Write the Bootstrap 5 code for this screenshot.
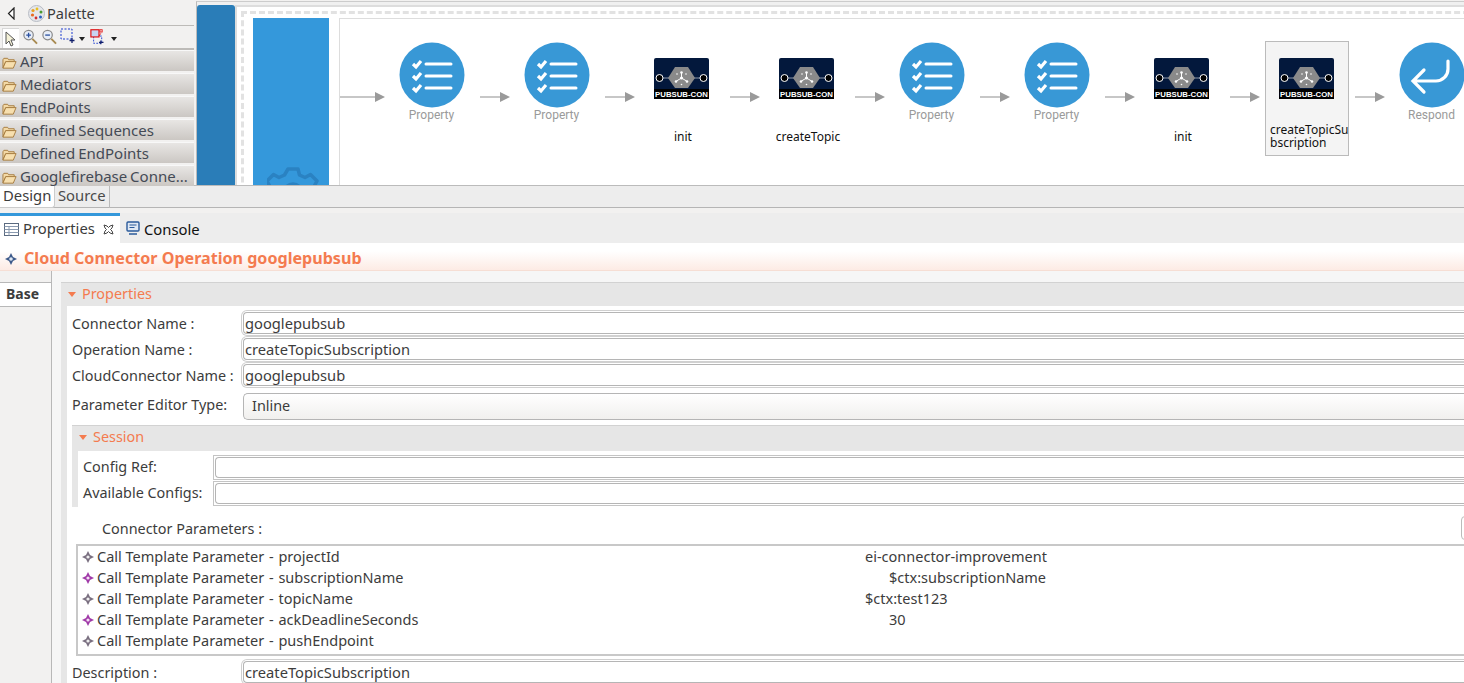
<!DOCTYPE html>
<html lang="en">
<head>
<meta charset="UTF-8">
<title>Cloud Connector Operation googlepubsub</title>
<link href="https://cdn.jsdelivr.net/npm/bootstrap@5.3.0/dist/css/bootstrap.min.css" rel="stylesheet">
<style>
html, body { height: 683px; overflow: hidden; }
body { width: 1464px; background: #f2f1f0; font-family: "Noto Sans", sans-serif; font-size: 14.4px; color: #3c3c3c; line-height: 1.2; }
.ui-top { height: 185px; }
.palette { width: 194px; background: #f2f1f0; flex: none; }
.pal-head { height: 26px; padding: 2px 0 0 7px; border-bottom: 1px solid #bdbbb8; font-size: 14.6px; }
.pal-logo { margin-left: 13px; }
.pal-title { margin-left: 2px; }
.pal-tools { height: 24px; padding: 2px 0 0 2px; border-bottom: 2px solid #bdbbb8; gap: 3px; }
.pal-sel { width: 17px; height: 20px; background: #fff; border: 1px solid #d8d8d8; border-width: 1px 0 0 1px; }
.tool-caret { margin-top: 9px; }
.tool-red { margin-left: 2px; }
.pal-group { height: 21px; margin-bottom: 2px; padding: 1px 0 0 2px; background: linear-gradient(#e8e6e4, #cbc7c3); border-top: 1px solid #f8f8f8; color: #444a55; font-size: 15px; word-spacing: -1px; white-space: nowrap; overflow: hidden; }
.canvas-wrap { flex: 1; margin-left: 2px; background: #f0f0f0; border-left: 1px solid #bbb; padding-top: 3px; border-top: 1px solid #ccc; margin-top: 1px; }
.blue-rail { width: 38px; flex: none; background: #2a7db8; border-radius: 3px 3px 0 0; }
.canvas { flex: 1; background: #fff; border-left: 2px solid #ddd; border-top: 2px solid #ddd; padding: 4px 0 0 4px; overflow: hidden; }
.dash-area { border-left: 3px dashed #e2e2e2; border-top: 3px dashed #e2e2e2; padding: 4px 0 0 9px; height: 190px; width: 1300px; }
.seq-block { width: 76px; height: 170px; background: #3498db; flex: none; position: relative; overflow: hidden; }
.seq-gear { position: absolute; left: 14px; top: 149px; }
.seq-flow { border-left: 1px solid #ddd; border-top: 1px solid #ddd; margin-left: 10px; flex: 1; height: 170px; }
.flow-arrow { flex: none; height: 12px; margin-top: 72px; }
.flow-cell { width: 95px; flex: none; padding: 23px 2px 0 0; text-align: center; position: relative; }
.flow-cell svg { display: block; margin: 0 auto; }
.prop-label { font-family: "Roboto", sans-serif; font-size: 12px; color: #9a9a9a; margin-top: 0; }
.flow-cell.pub-cell { padding-top: 39px; }
.pub-name { font-size: 12px; color: #111; margin-top: 31px; padding-left: 3px; }
.pub-picked { position: absolute; left: 5px; top: 22px; width: 84px; height: 115px; background: #f4f4f4; border: 1px solid #bbb; padding: 16px 0 0 4px; text-align: left; overflow: hidden; }
.pub-picked .pub-name { margin-top: 24px; padding-left: 0; word-break: break-all; line-height: 13px; margin-right: -2px; }
.pub-picked svg { margin-left: 9px; }
.design-tabs { height: 23px; background: #ededed; border-top: 1px solid #bbb; border-bottom: 1px solid #b5b5b5; font-size: 14.8px; }
.design-tab { height: 22px; padding: 1px 3px 0; }
.design-tab.on { background: #fff; width: 55px; border-radius: 0 0 3px 0; border-right: 1px solid #ccc; border-bottom: 1px solid #ccc; }
.design-tab.off { width: 55px; color: #4a4a4a; border-right: 1px solid #bbb; }
.view-tabs { height: 30px; margin-top: 5px; background: #ededed; font-size: 14.8px; }
.view-tab { width: 120px; height: 30px; background: #fff; border-top: 3px solid #3498db; padding: 0 0 1px 4px; flex: none; }
.view-tab-b { padding: 8px 0 0 6px; color: #111; }
.title-band { height: 28px; background: linear-gradient(#fff 30%, #fdebe4); padding: 5px 0 0 5px; color: #f47b4f; font-weight: 700; font-size: 16.1px; border-bottom: 1px solid #f6ded4; gap: 7px; white-space: nowrap; }
.work { height: 412px; }
.side-tabs { width: 52px; flex: none; padding-top: 11px; border-right: 1px solid #b8b8b8; }
.side-tab { height: 25px; width: 51px; background: #fff; font-weight: 700; font-size: 14px; padding: 3px 0 0 6px; border-top: 1px solid #b8b8b8; border-bottom: 1px solid #b8b8b8; margin-right: -1px; position: relative; }
.prop-pane { flex: 1; background: #f6f6f6; padding: 11px 0 0 9px; overflow: hidden; }
.prop-sect { width: 1420px; background: #fff; }
.sect-head { height: 24px; background: #e6e6e6; border-top: 1px solid #d2d2d2; color: #f47b4f; padding: 2px 0 0 7px; }
.sect-tri { display: inline-block; width: 0; height: 0; border: 4px solid transparent; border-top: 5px solid #f47b4f; border-bottom: 0; margin-right: 6px; vertical-align: middle; position: relative; top: -1px; }
.sect-body { border-left: 6px solid #e6e6e6; padding: 4px 0 0 5px; height: 400px; }
.form-line { height: 26px; padding-top: 2px; }
.form-cap { width: 171px; flex: none; padding-top: 3px; white-space: nowrap; }
.form-control.eclipse-input { height: 22px; padding: 0 1px; border-radius: 4px 0 0 4px; border: 1px solid #b5b5b5; border-right: 0; font: inherit; font-size: 14.7px; color: #3c3c3c; box-shadow: 0 0 0 1px #fff, 0 0 0 2px #d0d0d0; }
.combo-line { height: 37px; padding-top: 5px; }
.combo-box { height: 27px; flex: 1; padding: 3px 8px; border: 1px solid #b5b5b5; border-right: 0; border-radius: 5px 0 0 5px; background: linear-gradient(#fff, #f1f0ee); }
.sess-head { height: 26px; background: #e6e6e6; color: #f47b4f; padding: 2px 0 0 7px; border-top: 1px solid #d2d2d2; }
.sess-body { border-left: 6px solid #e6e6e6; height: 56px; padding: 4px 0 0 5px; }
.sess-line { height: 26px; }
.sess-cap { width: 130px; flex: none; padding-top: 3px; }
.sess-field { flex: 1; height: 25px; border: 1px solid #c4c4c4; padding: 1px 1px 0 1px; border-right: 0; }
.sess-field i { display: block; height: 21px; background: #fff; border: 1px solid #b5b5b5; border-right: 0; border-radius: 4px 0 0 4px; }
.conn-line { height: 37px; padding: 13px 0 0 30px; position: relative; }
.conn-btn { position: absolute; left: 1389px; top: 9px; width: 20px; height: 24px; border: 1px solid #bbb; border-radius: 4px; background: #fff; }
.param-list { margin-left: 4px; height: 112px; border: 2px solid #c8c8c8; border-right: 0; overflow: hidden; font-size: 14.5px; }
.param-row { height: 21px; padding-left: 4px; white-space: nowrap; }
.param-row svg { flex: none; margin-right: 3px; }
.param-name { width: 768px; flex: none; }
.param-dash { margin: 0 1px; }
.form-line.desc-line { padding-top: 5px; height: 30px; }
</style>
</head>
<body>
<svg width="0" height="0" class="d-none">
  <defs>
    <linearGradient id="pub-shine" x1="0" y1="1" x2="1" y2="0"><stop offset="0" stop-color="#03183c"/><stop offset="1" stop-color="#8a93a8"/></linearGradient>
    <symbol id="ic-folder" viewBox="0 0 16 14"><path d="M1 3.500 2 2h4l1 1.500h6v2H4L1 12z" fill="#f3d9a6" stroke="#a67c3f"/><path d="M1 12.500 4 5.500h11l-3 7z" fill="#f7dfae" stroke="#a67c3f"/></symbol>
    <symbol id="ic-list" viewBox="0 0 66 66"><circle cx="33" cy="33" r="32.500" fill="#3898d6"/><g stroke="#fff" stroke-width="3" stroke-linecap="round" fill="none"><path d="M27 22h25M27 34h25M27 46h25"/><path d="M14 22l3 3 5-6M14 34l3 3 5-6M14 46l3 3 5-6" stroke-width="3.200" stroke-linecap="butt"/></g></symbol>
    <symbol id="ic-pub" viewBox="0 0 55 41"><path d="M2 0h51q2 0 2 2v39H0V2q0-2 2-2z" fill="#03183c"/><path d="M2 0h29L9 19H0V2q0-2 2-2z" fill="url(#pub-shine)"/><rect y="31" width="55" height="10" fill="#000"/><path d="M5 20h45" stroke="#8d97aa"/><path d="M14 20l7-11h13l7 11-7 10H21z" fill="#8a8a8a"/><circle cx="5.500" cy="20" r="3.500" fill="#000" stroke="#fff"/><circle cx="49.500" cy="20" r="3.500" fill="#000" stroke="#fff"/><path d="M27.500 20v-5M27.500 20l-5 3M27.500 20l5 3" stroke="#fff"/><g fill="#fff"><circle cx="27.500" cy="20" r="1.600"/><circle cx="27.500" cy="14.500" r="1.300"/><circle cx="22" cy="23.500" r="1.300"/><circle cx="33" cy="23.500" r="1.300"/><circle cx="23" cy="16" r=".8"/><circle cx="32" cy="16" r=".8"/><circle cx="27.500" cy="26.500" r=".8"/></g><text x="27.500" y="39" text-anchor="middle" font-family="Liberation Sans, sans-serif" font-weight="700" font-size="7.800" fill="#fff">PUBSUB-CON</text></symbol>
    <symbol id="ic-diamond" viewBox="0 0 12 12"><path d="M6 0l2 4 4 2-4 2-2 4-2-4-4-2 4-2z" fill="#7a6f80"/><circle cx="6" cy="6" r="1.600" fill="#eee"/></symbol>
    <symbol id="ic-diamond-p" viewBox="0 0 12 12"><path d="M6 0l2 4 4 2-4 2-2 4-2-4-4-2 4-2z" fill="#a03aa8"/><circle cx="6" cy="6" r="1.600" fill="#f3e0f4"/></symbol>
    <symbol id="ic-diamond-b" viewBox="0 0 12 12"><path d="M6 0l2 4 4 2-4 2-2 4-2-4-4-2 4-2z" fill="#3d5a8a"/><circle cx="6" cy="6" r="1.800" fill="#dfe8f4"/></symbol>
    <symbol id="ic-arrow" viewBox="0 0 30 12"><path d="M0 6h20" stroke="#b4b4b4" stroke-width="1.500"/><path d="M20 1l10 5-10 5z" fill="#9a9a9a"/></symbol>
  </defs>
</svg>

<div class="ui-top d-flex">
  <div class="palette">
    <div class="pal-head d-flex align-items-center">
      <svg width="8" height="13" viewBox="0 0 8 13"><path d="M7 1 1.500 6.500 7 12z" fill="#fff" stroke="#222" stroke-width="1.200"/></svg>
      <svg class="pal-logo" width="17" height="17" viewBox="0 0 17 17"><circle cx="8.500" cy="8.500" r="8" fill="#e4e6ea" stroke="#b8bcc4"/><circle cx="5" cy="5.500" r="1.600" fill="#e8a020"/><circle cx="9" cy="4" r="1.400" fill="#e8c020"/><circle cx="13" cy="7" r="1.500" fill="#4a9a30"/><circle cx="4.500" cy="10" r="1.600" fill="#e86a20"/><circle cx="8" cy="13" r="1.400" fill="#d03030"/><circle cx="12.500" cy="12" r="1.500" fill="#2a60c0"/></svg>
      <span class="pal-title">Palette</span>
    </div>
    <div class="pal-tools d-flex align-items-start">
      <div class="pal-sel"><svg width="14" height="18" viewBox="0 0 14 18"><path d="M3 2v12l3-3 2 5 2-1-2-5h4z" fill="#f5f2d8" stroke="#555"/></svg></div>
      <svg width="16" height="17" viewBox="0 0 17 17"><circle cx="7" cy="7" r="5" fill="#e8eef8" stroke="#8a8a8a" stroke-width="1.300"/><path d="M4.500 7h5M7 4.500v5" stroke="#2a50a0" stroke-width="1.400"/><path d="M11 11l5 5" stroke="#a88a50" stroke-width="2"/></svg>
      <svg width="16" height="17" viewBox="0 0 17 17"><circle cx="7" cy="7" r="5" fill="#e8eef8" stroke="#8a8a8a" stroke-width="1.300"/><path d="M4.500 7h5" stroke="#2a50a0" stroke-width="1.400"/><path d="M11 11l5 5" stroke="#a88a50" stroke-width="2"/></svg>
      <svg width="16" height="16" viewBox="0 0 16 16"><rect x="1" y="1" width="11" height="10" fill="none" stroke="#1a3ad0" stroke-dasharray="2 1.500"/><path d="M12 10v5M9.500 12.500h5" stroke="#12206a" stroke-width="1.300"/></svg>
      <svg class="tool-caret" width="6" height="4" viewBox="0 0 6 4"><path d="M0 0h6L3 4z" fill="#222"/></svg>
      <svg class="tool-red" width="18" height="17" viewBox="0 0 20 17"><rect x="4" y="8" width="9" height="8" fill="none" stroke="#1a3ad0" stroke-dasharray="2 1.500"/><rect x="1" y="1" width="9" height="8" fill="#c8d4f0" stroke="#e01010" stroke-width="1.300"/><rect x="11" y="1" width="2.500" height="2.500" fill="#fff" stroke="#e01010"/><path d="M10 8l2-3" stroke="#e01010"/><path d="M12 13v4M10 15h5" stroke="#12206a" stroke-width="1.300"/></svg>
      <svg class="tool-caret" width="6" height="4" viewBox="0 0 6 4"><path d="M0 0h6L3 4z" fill="#222"/></svg>
    </div>
    <div class="pal-group"><svg width="15" height="14"><use href="#ic-folder"/></svg> API</div>
    <div class="pal-group"><svg width="15" height="14"><use href="#ic-folder"/></svg> Mediators</div>
    <div class="pal-group"><svg width="15" height="14"><use href="#ic-folder"/></svg> EndPoints</div>
    <div class="pal-group"><svg width="15" height="14"><use href="#ic-folder"/></svg> Defined Sequences</div>
    <div class="pal-group"><svg width="15" height="14"><use href="#ic-folder"/></svg> Defined EndPoints</div>
    <div class="pal-group"><svg width="15" height="14"><use href="#ic-folder"/></svg> Googlefirebase Conne...</div>
  </div>
  <div class="canvas-wrap d-flex">
    <div class="blue-rail"></div>
    <div class="canvas">
      <div class="dash-area d-flex">
        <div class="seq-block">
          <svg class="seq-gear" width="52" height="52" viewBox="0 0 52 52"><path d="M21 2h10l1.500 6 5.500 2.500 5.500-3 6.500 6.500-3 5.500 2 5.500 0 8h-48l0-8 2-5.500-3-5.500 6.500-6.500 5.500 3 5.500-2.500z" fill="none" stroke="#2a82c2" stroke-width="3.500" stroke-linejoin="round"/><circle cx="26" cy="26" r="9" fill="none" stroke="#2a82c2" stroke-width="3.500"/></svg>
        </div>
        <div class="seq-flow d-flex">
          <svg class="flow-arrow" width="45" height="12" viewBox="0 0 45 12"><path d="M0 6h35" stroke="#b4b4b4" stroke-width="1.500"/><path d="M35 1l10 5-10 5z" fill="#9a9a9a"/></svg>
          <div class="flow-cell"><svg width="66" height="66"><use href="#ic-list"/></svg><div class="prop-label">Property</div></div>
          <svg class="flow-arrow" width="30" height="12"><use href="#ic-arrow"/></svg>
          <div class="flow-cell"><svg width="66" height="66"><use href="#ic-list"/></svg><div class="prop-label">Property</div></div>
          <svg class="flow-arrow" width="30" height="12"><use href="#ic-arrow"/></svg>
          <div class="flow-cell pub-cell"><svg width="55" height="41"><use href="#ic-pub"/></svg><div class="pub-name">init</div></div>
          <svg class="flow-arrow" width="30" height="12"><use href="#ic-arrow"/></svg>
          <div class="flow-cell pub-cell"><svg width="55" height="41"><use href="#ic-pub"/></svg><div class="pub-name">createTopic</div></div>
          <svg class="flow-arrow" width="30" height="12"><use href="#ic-arrow"/></svg>
          <div class="flow-cell"><svg width="66" height="66"><use href="#ic-list"/></svg><div class="prop-label">Property</div></div>
          <svg class="flow-arrow" width="30" height="12"><use href="#ic-arrow"/></svg>
          <div class="flow-cell"><svg width="66" height="66"><use href="#ic-list"/></svg><div class="prop-label">Property</div></div>
          <svg class="flow-arrow" width="30" height="12"><use href="#ic-arrow"/></svg>
          <div class="flow-cell pub-cell"><svg width="55" height="41"><use href="#ic-pub"/></svg><div class="pub-name">init</div></div>
          <svg class="flow-arrow" width="30" height="12"><use href="#ic-arrow"/></svg>
          <div class="flow-cell"><div class="pub-picked"><svg width="55" height="41"><use href="#ic-pub"/></svg><div class="pub-name">createTopicSubscription</div></div></div>
          <svg class="flow-arrow" width="30" height="12"><use href="#ic-arrow"/></svg>
          <div class="flow-cell"><svg width="66" height="66" viewBox="0 0 66 66"><circle cx="33" cy="33" r="32.500" fill="#3898d6"/><path d="M49 19v8a12 12 0 0 1-12 12H15M25 28 14 39l11 11" fill="none" stroke="#fff" stroke-width="3.200" stroke-linecap="round"/></svg><div class="prop-label">Respond</div></div>
        </div>
      </div>
    </div>
  </div>
</div>

<div class="design-tabs d-flex">
  <div class="design-tab on">Design</div>
  <div class="design-tab off">Source</div>
</div>

<div class="view-tabs d-flex">
  <div class="view-tab d-flex align-items-center gap-1">
    <svg width="15" height="13" viewBox="0 0 15 13"><rect x=".5" y=".5" width="14" height="12" fill="#fff" stroke="#5a6a80"/><path d="M.5 3.500h14M5 3.500v9M.5 6.500h14M.5 9.500h14" stroke="#8a9ab0"/></svg>
    <span>Properties</span>
    <svg class="ms-1" width="11" height="11" viewBox="0 0 11 11"><path d="M1 1l3 1 1.500 1.500L7 2l3-1-1 3-1.500 1.500L9 7l1 3-3-1-1.500-1.500L4 9l-3 1 1-3 1.500-1.500L2 4z" fill="#fff" stroke="#444"/></svg>
  </div>
  <div class="view-tab-b d-flex align-items-start gap-1">
    <svg width="14" height="14" viewBox="0 0 14 14"><rect x="1" y="1" width="12" height="9" rx="1" fill="#dfe8f4" stroke="#2a5a9a" stroke-width="1.400"/><path d="M3.500 4h7M3.500 6.500h5" stroke="#2a5a9a"/><path d="M3 13h8" stroke="#2a5a9a" stroke-width="1.500"/></svg>
    <span>Console</span>
  </div>
</div>

<div class="title-band d-flex align-items-center">
  <svg width="12" height="12"><use href="#ic-diamond-b"/></svg>
  <span>Cloud Connector Operation googlepubsub</span>
</div>

<div class="work d-flex">
  <div class="side-tabs"><div class="side-tab">Base</div></div>
  <div class="prop-pane">
    <div class="prop-sect">
      <div class="sect-head"><span class="sect-tri"></span>Properties</div>
      <div class="sect-body">
        <div class="form-line d-flex"><div class="form-cap">Connector Name :</div><input class="form-control eclipse-input" value="googlepubsub"></div>
        <div class="form-line d-flex"><div class="form-cap">Operation Name :</div><input class="form-control eclipse-input" value="createTopicSubscription"></div>
        <div class="form-line d-flex"><div class="form-cap">CloudConnector Name :</div><input class="form-control eclipse-input" value="googlepubsub"></div>
        <div class="combo-line d-flex"><div class="form-cap">Parameter Editor Type:</div><div class="combo-box">Inline</div></div>
        <div class="sess-head"><span class="sect-tri"></span>Session</div>
        <div class="sess-body">
          <div class="sess-line d-flex"><div class="sess-cap">Config Ref:</div><div class="sess-field"><i></i></div></div>
          <div class="sess-line d-flex"><div class="sess-cap">Available Configs:</div><div class="sess-field"><i></i></div></div>
        </div>
        <div class="conn-line">Connector Parameters :<div class="conn-btn"></div></div>
        <div class="param-list">
          <div class="param-row d-flex align-items-center"><svg width="12" height="12"><use href="#ic-diamond"/></svg><div class="param-name">Call Template Parameter <span class="param-dash">-</span> projectId</div><div>ei-connector-improvement</div></div>
          <div class="param-row d-flex align-items-center"><svg width="12" height="12"><use href="#ic-diamond-p"/></svg><div class="param-name">Call Template Parameter <span class="param-dash">-</span> subscriptionName</div><div class="ps-4">$ctx:subscriptionName</div></div>
          <div class="param-row d-flex align-items-center"><svg width="12" height="12"><use href="#ic-diamond"/></svg><div class="param-name">Call Template Parameter <span class="param-dash">-</span> topicName</div><div>$ctx:test123</div></div>
          <div class="param-row d-flex align-items-center"><svg width="12" height="12"><use href="#ic-diamond-p"/></svg><div class="param-name">Call Template Parameter <span class="param-dash">-</span> ackDeadlineSeconds</div><div class="ps-4">30</div></div>
          <div class="param-row d-flex align-items-center"><svg width="12" height="12"><use href="#ic-diamond"/></svg><div class="param-name">Call Template Parameter <span class="param-dash">-</span> pushEndpoint</div></div>
        </div>
        <div class="form-line desc-line d-flex"><div class="form-cap">Description :</div><input class="form-control eclipse-input" value="createTopicSubscription"></div>
      </div>
    </div>
  </div>
</div>
</body>
</html>
